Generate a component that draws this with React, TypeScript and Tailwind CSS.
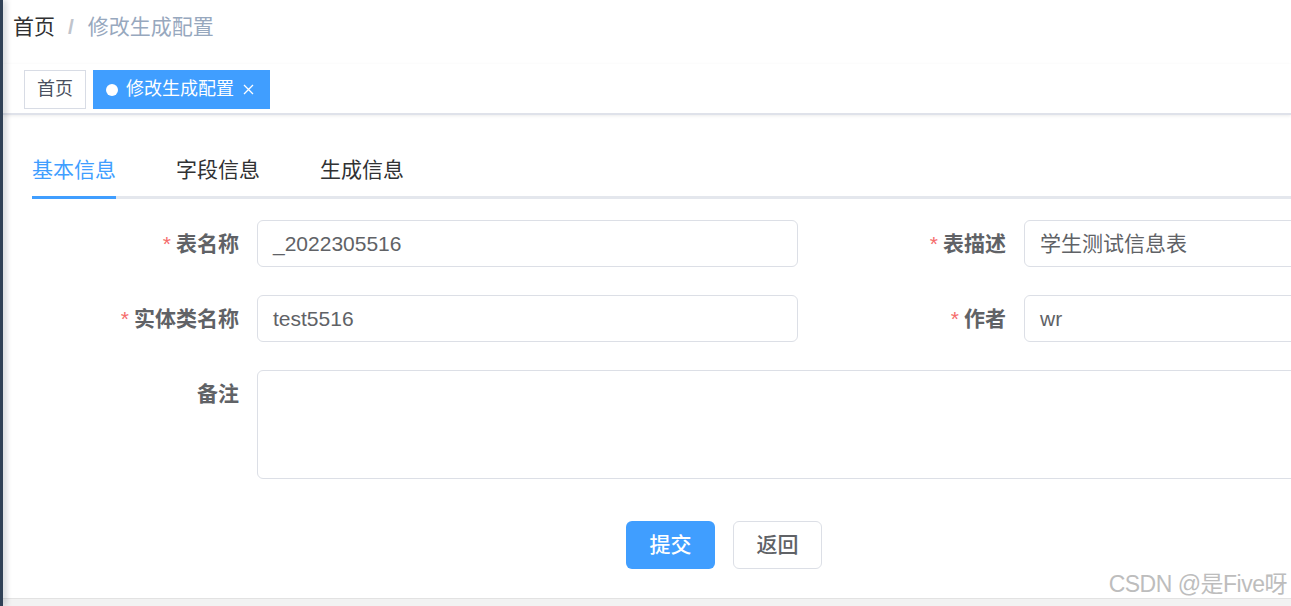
import React from 'react';

const cjk = { fontFamily: '"Liberation Sans", "Noto Sans CJK SC", sans-serif' };

const Label: React.FC<{ text: string; required?: boolean; width: string }> = ({ text, required, width }) => (
  <div className={`${width} shrink-0 pr-[18px] text-right h-[47px] leading-[47px] text-[21px] font-bold text-[#606266]`}>
    {required && <span className="text-[#f56c6c] mr-[5px] font-normal">*</span>}
    {text}
  </div>
);

const Input: React.FC<{ value: string; width?: string }> = ({ value, width = 'w-[541px]' }) => (
  <div className={`${width} shrink-0 h-[47px] border border-[#dcdfe6] rounded-[6px] px-[15px] leading-[45px] text-[21px] text-[#606266]`}>
    {value}
  </div>
);

export default function App() {
  const tabs = ['基本信息', '字段信息', '生成信息'];

  return (
    <div className="w-[1291px] h-[606px] flex overflow-hidden bg-white relative" style={cjk}>
      {/* sidebar edge */}
      <div className="w-[3px] shrink-0 bg-[#304156] z-20 shadow-[2px_0_6px_rgba(0,21,41,0.35)]"></div>

      <div className="flex-1 flex flex-col min-w-0">
        {/* navbar */}
        <div className="h-[64px] shrink-0 bg-white shadow-[0_1px_4px_rgba(0,21,41,0.08)] z-10 pl-[10px] pt-[15px]">
          <div className="flex items-center h-[24px] text-[21px] leading-[24px]">
            <span className="text-[#303133]">首页</span>
            <span className="text-[#c0c4cc] font-bold mx-[13px]">/</span>
            <span className="text-[#97a8be] ml-[1px]">修改生成配置</span>
          </div>
        </div>

        {/* tags view */}
        <div className="h-[51px] shrink-0 bg-white border-b-2 border-[#dfe2ea] shadow-[0_1px_3px_0_rgba(0,0,0,0.08)] pl-[21px] pt-[6px] flex items-start gap-[7px] z-10">
          <div className="h-[39px] px-[12px] border border-[#d8dce5] flex items-center text-[18px] text-[#495060]">首页</div>
          <div className="h-[39px] pl-[13px] pr-[15px] bg-[#409eff] flex items-center text-[18px] text-white">
            <span className="w-[12px] h-[12px] rounded-full bg-white mr-[8px]"></span>
            <span>修改生成配置</span>
            <svg className="ml-[8px]" width="13" height="13" viewBox="0 0 13 13" fill="none" stroke="white" strokeWidth="1.3">
              <path d="M2 2 L11 11 M11 2 L2 11" />
            </svg>
          </div>
        </div>

        {/* content */}
        <div className="flex-1 bg-[#f2f2f2] flex flex-col">
          <div className="h-[484px] shrink-0 bg-white border-b border-[#e2e2e2] pl-[29px] pt-[24px] overflow-hidden">
            {/* tabs */}
            <div className="relative">
              <div className="flex h-[57px] items-start text-[21px]">
                {tabs.map((t, i) => (
                  <div
                    key={t}
                    className={`${i === 0 ? 'pr-[30px] text-[#409eff]' : 'px-[30px] text-[#303133]'} leading-[61px]`}
                  >
                    {t}
                  </div>
                ))}
              </div>
              <div className="h-[3px] bg-[#e4e7ed] relative">
                <div className="absolute left-0 top-0 h-[3px] w-[84px] bg-[#409eff]"></div>
              </div>
            </div>

            {/* form */}
            <div className="pt-[21px] flex flex-col gap-[28px]">
              <div className="flex">
                <Label text="表名称" required width="w-[225px]" />
                <Input value="_2022305516" />
                <Label text="表描述" required width="w-[226px]" />
                <Input value="学生测试信息表" />
              </div>
              <div className="flex">
                <Label text="实体类名称" required width="w-[225px]" />
                <Input value="test5516" />
                <Label text="作者" required width="w-[226px]" />
                <Input value="wr" />
              </div>
              <div className="flex">
                <Label text="备注" width="w-[225px]" />
                <div className="w-[1308px] shrink-0 h-[109px] border border-[#dcdfe6] rounded-[6px]"></div>
              </div>
            </div>

            {/* buttons */}
            <div className="flex gap-[18px] pl-[594px] pt-[42px]">
              <button className="w-[89px] h-[48px] rounded-[6px] bg-[#409eff] text-white text-[21px] font-medium">提交</button>
              <button className="w-[89px] h-[48px] rounded-[6px] bg-white border border-[#dcdfe6] text-[#606266] text-[21px] font-medium">返回</button>
            </div>
          </div>
        </div>
      </div>

      {/* watermark */}
      <div className="absolute right-[4px] top-[569px] text-[23px] leading-[30px] text-[#bdbdbd] tracking-[-0.5px]">
        CSDN @是Five呀
      </div>
    </div>
  );
}
